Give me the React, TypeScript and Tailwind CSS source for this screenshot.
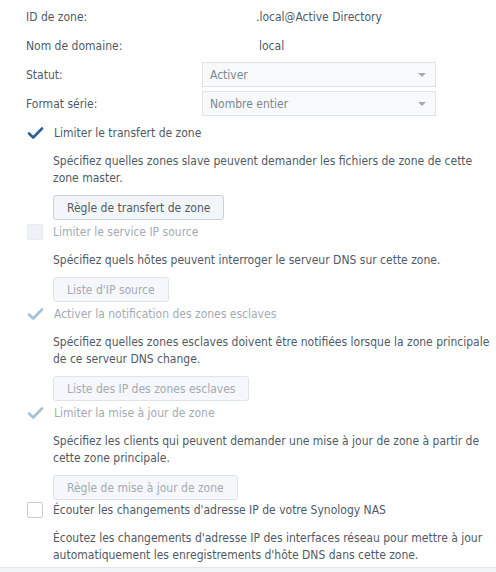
import { clsx } from 'clsx';

const FONT = "font-['DejaVu_Sans_Condensed','Liberation_Sans',sans-serif]";

type Section = {
  label: string;
  state: 'checked' | 'unchecked' | 'disabled-checked' | 'disabled-unchecked';
  desc: string[];
  button?: string;
};

const SECTIONS: Section[] = [
  {
    label: 'Limiter le transfert de zone',
    state: 'checked',
    desc: [
      'Spécifiez quelles zones slave peuvent demander les fichiers de zone de cette',
      'zone master.',
    ],
    button: 'Règle de transfert de zone',
  },
  {
    label: 'Limiter le service IP source',
    state: 'disabled-unchecked',
    desc: ['Spécifiez quels hôtes peuvent interroger le serveur DNS sur cette zone.'],
    button: "Liste d'IP source",
  },
  {
    label: 'Activer la notification des zones esclaves',
    state: 'disabled-checked',
    desc: [
      'Spécifiez quelles zones esclaves doivent être notifiées lorsque la zone principale',
      'de ce serveur DNS change.',
    ],
    button: 'Liste des IP des zones esclaves',
  },
  {
    label: 'Limiter la mise à jour de zone',
    state: 'disabled-checked',
    desc: [
      'Spécifiez les clients qui peuvent demander une mise à jour de zone à partir de',
      'cette zone principale.',
    ],
    button: 'Règle de mise à jour de zone',
  },
  {
    label: "Écouter les changements d'adresse IP de votre Synology NAS",
    state: 'unchecked',
    desc: [
      "Écoutez les changements d'adresse IP des interfaces réseau pour mettre à jour",
      "automatiquement les enregistrements d'hôte DNS dans cette zone.",
    ],
  },
];

function Checkbox({ state }: { state: Section['state'] }) {
  if (state === 'checked' || state === 'disabled-checked') {
    return (
      <svg width="17" height="16" viewBox="0 0 17 16" className="shrink-0">
        <path
          d="M2 8.5 L6.2 12.5 L15 3.5"
          fill="none"
          stroke={state === 'checked' ? '#2a5f9e' : '#a9bfd8'}
          strokeWidth="2.6"
          strokeLinecap="round"
          strokeLinejoin="round"
        />
      </svg>
    );
  }
  return (
    <span
      className={clsx(
        'block h-4 w-4 shrink-0 rounded-[2px] border',
        state === 'unchecked' ? 'border-[#c5ccd3] bg-white' : 'border-[#e6ebf0] bg-[#eef2f6]',
      )}
    />
  );
}

function Select({ value }: { value: string }) {
  return (
    <div className="flex h-[25px] w-[234px] items-center justify-between border border-[#dde3e9] bg-[#f7f9fb] pl-[7px] pr-[9px] text-[#7c8791]">
      <span>{value}</span>
      <svg width="8" height="4" viewBox="0 0 8 4">
        <path d="M0 0 H8 L4 4 Z" fill="#a2abb4" />
      </svg>
    </div>
  );
}

export default function App() {
  return (
    <div className={clsx('relative h-[572px] w-[496px] overflow-hidden bg-white text-[12px] text-[#505a64]', FONT)}>
      <div className="pl-[26px] pt-[2px]">
        <div className="flex h-[29px] items-center">
          <span className="w-[230px]">ID de zone:</span>
          <span>.local@Active Directory</span>
        </div>
        <div className="flex h-[29px] items-center">
          <span className="w-[233px]">Nom de domaine:</span>
          <span>local</span>
        </div>
        <div className="flex h-[29px] items-center">
          <span className="w-[176px]">Statut:</span>
          <Select value="Activer" />
        </div>
        <div className="flex h-[29px] items-center">
          <span className="w-[176px]">Format série:</span>
          <Select value="Nombre entier" />
        </div>
      </div>

      <div className="pl-[27px] pt-[5px]">
        {SECTIONS.map((s, i) => {
          const disabled = s.state.startsWith('disabled');
          return (
            <div key={i} className={clsx(i > 0 && i < SECTIONS.length - 1 && 'mt-[2px]')}>
              <div className="flex h-5 items-center gap-[10px]">
                <Checkbox state={s.state} />
                <span className={disabled ? 'text-[#a3abb3]' : ''}>{s.label}</span>
              </div>
              <div className="ml-[26px] mt-[10px] leading-[17px]">
                {s.desc.map((line) => (
                  <div key={line}>{line}</div>
                ))}
              </div>
              {s.button && (
                <button
                  className={clsx(
                    'ml-[26px] mt-[8px] flex h-[25px] items-center rounded-[3px] border px-[13px]',
                    disabled
                      ? 'border-[#dde4ea] bg-[#f5f7fa] text-[#a3abb3]'
                      : 'border-[#c8d1da] bg-[#f3f6f9] text-[#505a64]',
                  )}
                >
                  {s.button}
                </button>
              )}
            </div>
          );
        })}
      </div>

      <div className="absolute bottom-0 left-0 h-[5px] w-full border-t border-[#e3e6e9] bg-[#f2f3f5]" />
    </div>
  );
}
